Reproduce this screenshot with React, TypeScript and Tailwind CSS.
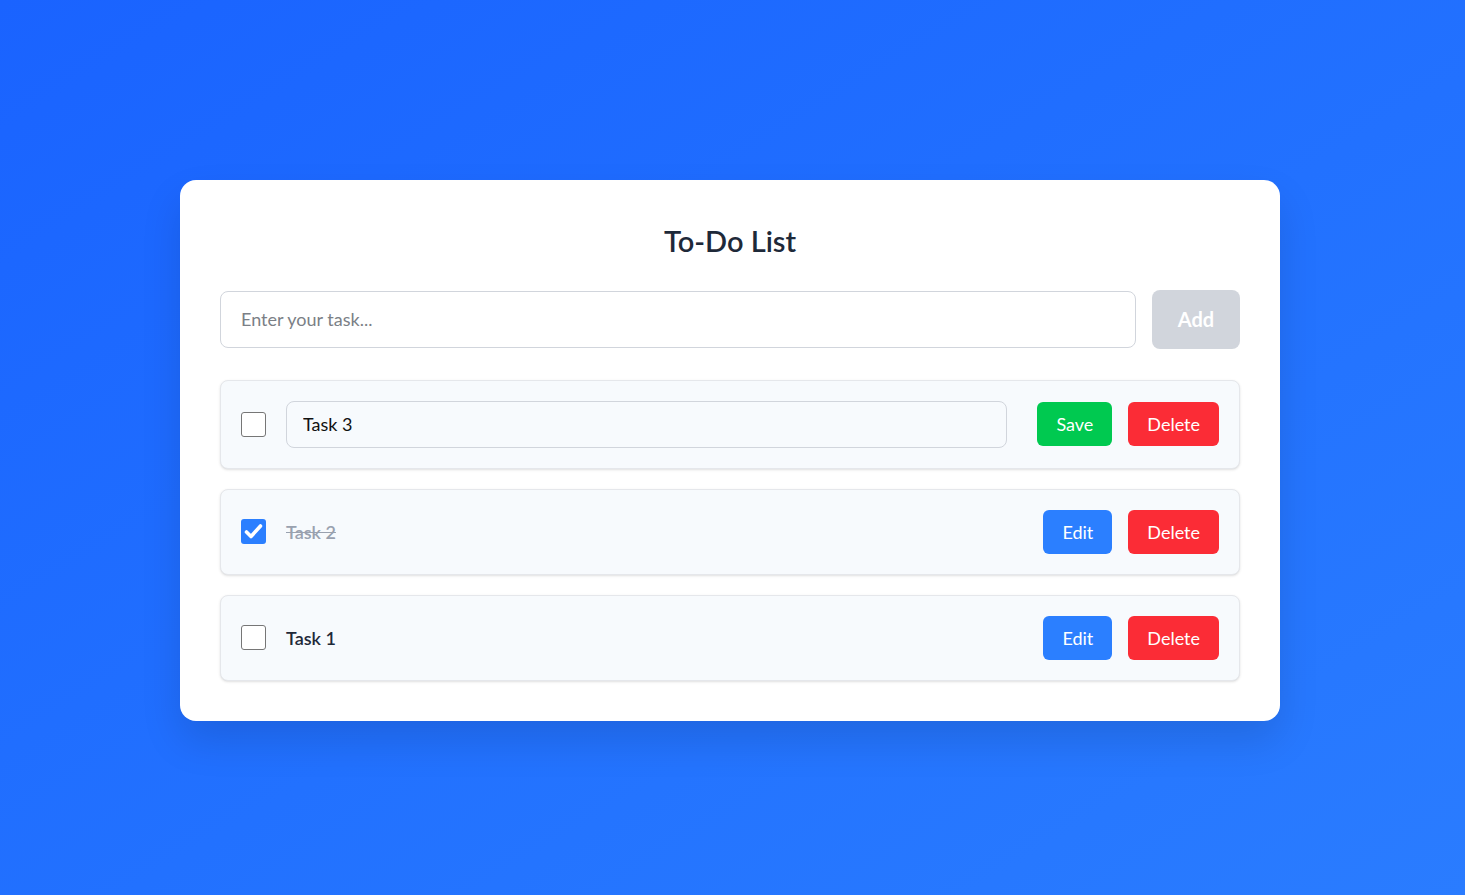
const FONT = { fontFamily: 'Lato, "Noto Sans", "Liberation Sans", sans-serif' }

function Checkbox({ checked }: { checked?: boolean }) {
  if (checked) {
    return (
      <div className="w-[25px] h-[25px] shrink-0 rounded-[3px] bg-[#2b7fff] flex items-center justify-center">
        <svg width="25" height="25" viewBox="0 0 25 25" fill="none">
          <path d="M5.5 13l4.5 4.5L19.5 7" stroke="white" strokeWidth="3.6" strokeLinecap="round" strokeLinejoin="round" />
        </svg>
      </div>
    )
  }
  return <div className="w-[25px] h-[25px] shrink-0 rounded-[3px] border-[1.5px] border-[#767676] bg-white" />
}

function Btn({ label, color }: { label: string; color: string }) {
  return (
    <button className={`h-11 px-[19px] rounded-md text-white text-lg ${color}`}>{label}</button>
  )
}

export default function App() {
  return (
    <div
      className="min-h-screen w-full flex items-center justify-center pr-[5px] pt-[5px] bg-gradient-to-br from-[#1a63ff] to-[#2a7cff]"
      style={FONT}
    >
      <div className="w-[1100px] bg-white rounded-2xl p-10 shadow-[0_20px_40px_rgba(0,0,0,0.12)]">
        <h1 className="text-[29px] leading-[42px] font-semibold text-center text-[#1e2939] mb-7">To-Do List</h1>

        {/* new task */}
        <div className="flex items-center gap-4">
          <input
            placeholder="Enter your task..."
            className="flex-1 h-[57px] border border-gray-300 rounded-lg px-5 text-lg text-gray-900 placeholder:text-[#7b7f86] outline-none"
          />
          <button className="w-[88px] h-[59px] rounded-lg bg-[#d1d5dc] text-white text-xl font-bold">Add</button>
        </div>

        {/* list */}
        <div className="mt-[31px] flex flex-col gap-5">
          <div className="flex items-center p-5 border border-gray-200 rounded-lg bg-[#f7fafd] shadow-sm">
            <Checkbox />
            <input
              defaultValue="Task 3"
              className="ml-5 mr-[30px] flex-1 h-[47px] border border-gray-300 rounded-lg px-4 text-lg text-[#111] bg-[#f7fafd] outline-none"
            />
            <div className="flex gap-4">
              <Btn label="Save" color="bg-[#00c950]" />
              <Btn label="Delete" color="bg-[#fb2c36]" />
            </div>
          </div>

          <div className="flex items-center p-5 border border-gray-200 rounded-lg bg-[#f7fafd] shadow-sm">
            <Checkbox checked />
            <span className="ml-5 flex-1 text-lg font-semibold text-gray-400 line-through">Task 2</span>
            <div className="flex gap-4">
              <Btn label="Edit" color="bg-[#2b7fff]" />
              <Btn label="Delete" color="bg-[#fb2c36]" />
            </div>
          </div>

          <div className="flex items-center p-5 border border-gray-200 rounded-lg bg-[#f7fafd] shadow-sm">
            <Checkbox />
            <span className="ml-5 flex-1 text-lg font-semibold text-[#1e2939]">Task 1</span>
            <div className="flex gap-4">
              <Btn label="Edit" color="bg-[#2b7fff]" />
              <Btn label="Delete" color="bg-[#fb2c36]" />
            </div>
          </div>
        </div>
      </div>
    </div>
  )
}
